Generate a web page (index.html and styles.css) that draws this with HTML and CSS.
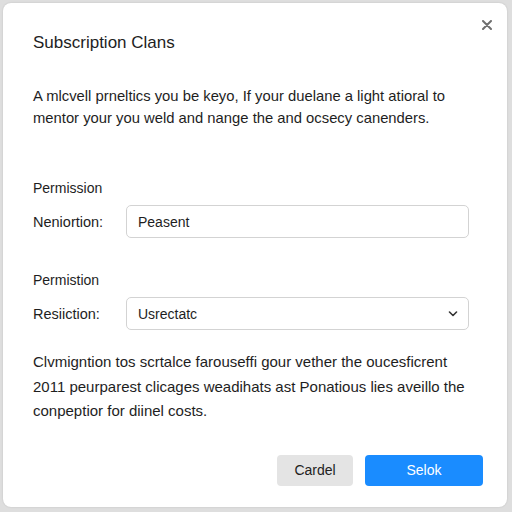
FILE: index.html
```html
<!DOCTYPE html>
<html lang="en">
<head>
    <meta charset="UTF-8">
    <meta name="viewport" content="width=device-width, initial-scale=1.0">
    <title>Subscription Clans</title>
    <link rel="stylesheet" href="styles.css">
</head>
<body>
    <div class="dialog">
        <button class="close" type="button" aria-label="Close">
            <svg width="10" height="10" viewBox="0 0 10 10">
                <path d="M1 1 L9 9 M9 1 L1 9" stroke="#6f6f6f" stroke-width="2" stroke-linecap="round"/>
            </svg>
        </button>
        <h2>Subscription Clans</h2>
        <p class="intro">A mlcvell prneltics you be keyo, If your duelane a light atioral to mentor your you weld and nange the and ocsecy canenders.</p>

        <div class="group">
            <div class="group-title">Permission</div>
            <div class="row">
                <label for="mention">Neniortion:</label>
                <input type="text" id="mention" value="Peasent">
            </div>
        </div>

        <div class="group">
            <div class="group-title">Permistion</div>
            <div class="row">
                <label for="restriction">Resiiction:</label>
                <div class="select">
                    <span>Usrectatc</span>
                    <svg width="10" height="6" viewBox="0 0 10 6">
                        <path d="M1.5 1 L5 4.5 L8.5 1" fill="none" stroke="#333" stroke-width="1.6" stroke-linecap="round" stroke-linejoin="round"/>
                    </svg>
                </div>
            </div>
        </div>

        <p class="note">Clvmigntion tos scrtalce farouseffi gour vether the oucesficrent 2011 peurparest clicages weadihats ast Ponatious lies aveillo the conpeptior for diinel costs.</p>

        <div class="actions">
            <button type="button" class="btn cancel">Cardel</button>
            <button type="button" class="btn primary">Selok</button>
        </div>
    </div>
</body>
</html>
```

FILE: styles.css
```css
body {
    margin: 0;
    padding: 3px 5px 5px 3px;
    background-color: #dedede;
    font-family: "Liberation Sans", Arial, sans-serif;
    color: #1e1e1e;
}

.dialog {
    position: relative;
    height: 504px;
    box-sizing: border-box;
    padding: 28px 38px 0 30px;
    background-color: #fff;
    border-radius: 8px;
    box-shadow: 0 0 2px rgba(0, 0, 0, 0.15);
}

.close {
    position: absolute;
    top: 14px;
    right: 12px;
    width: 16px;
    height: 16px;
    padding: 0;
    border: none;
    background: none;
    display: flex;
    align-items: center;
    justify-content: center;
}

h2 {
    margin: 0;
    font-size: 17px;
    font-weight: normal;
    line-height: 24px;
}

.intro {
    margin: 30px 0 0 0;
    font-size: 14.8px;
    line-height: 22px;
}

.group {
    margin-top: 49px;
}

.group + .group {
    margin-top: 32px;
}

.group-title {
    font-size: 14px;
    line-height: 20px;
}

.row {
    display: flex;
    align-items: center;
    margin-top: 7px;
}

label {
    width: 93px;
    font-size: 14.5px;
}

input[type="text"],
.select {
    flex: 1;
    height: 33px;
    box-sizing: border-box;
    padding: 0 11px;
    border: 1px solid #d3d3d3;
    border-radius: 5px;
    font-family: inherit;
    font-size: 14px;
    color: #1e1e1e;
}

.select {
    display: flex;
    align-items: center;
    justify-content: space-between;
    padding-right: 10px;
}

.note {
    margin: 20px 0 0 0;
    font-size: 15px;
    line-height: 24.5px;
}

.actions {
    display: flex;
    justify-content: flex-end;
    gap: 12px;
    margin-top: 31px;
    margin-right: -14px;
}

.btn {
    height: 31px;
    border: none;
    border-radius: 4px;
    font-family: inherit;
    font-size: 14px;
}

.cancel {
    width: 76px;
    background-color: #e4e4e4;
    color: #222;
}

.primary {
    width: 118px;
    background-color: #1a8cff;
    color: #fff;
}
```
